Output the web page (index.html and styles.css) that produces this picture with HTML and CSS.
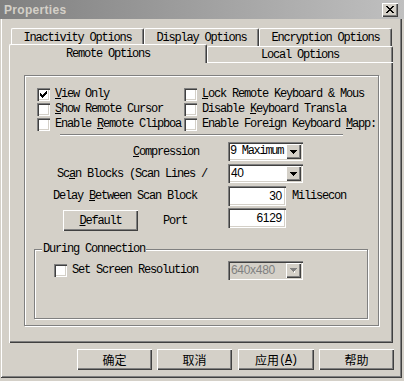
FILE: index.html
```html
<!DOCTYPE html>
<html>
<head>
<meta charset="utf-8">
<link rel="stylesheet" href="styles.css">
</head>
<body>
<div class="title">
  <span class="title-text">Properties</span>
  <span class="close"><svg width="8" height="7" viewBox="0 0 8 7" shape-rendering="crispEdges"><path d="M0 0h2v1h-2zM6 0h2v1h-2zM1 1h2v1h-2zM5 1h2v1h-2zM2 2h4v1h-4zM3 3h2v1h-2zM2 4h4v1h-4zM1 5h2v1h-2zM5 5h2v1h-2zM0 6h2v1h-2zM6 6h2v1h-2z" fill="#000"/></svg></span>
</div>
<div class="frame">
  <div class="tabrow back">
    <div class="tab w133">Inactivity Options</div>
    <div class="tab w115">Display Options</div>
    <div class="tab w133">Encryption Options</div>
  </div>
  <div class="tabrow front">
    <div class="tab sel">Remote Options</div>
    <div class="tab local">Local Options</div>
  </div>
  <div class="page">
    <div class="group">
      <div class="checks">
        <div class="chk"><span class="box"><svg width="13" height="13" viewBox="0 0 13 13" shape-rendering="crispEdges"><path d="M3 5h1v3h-1zM4 6h1v3h-1zM5 7h1v3h-1zM6 6h1v3h-1zM7 5h1v3h-1zM8 4h1v3h-1zM9 3h1v3h-1z" fill="#000"/></svg></span><span class="cl"><u>V</u>iew Only</span></div>
        <div class="chk"><span class="box"></span><span class="cl"><u>L</u>ock Remote Keyboard &amp; Mous</span></div>
        <div class="chk"><span class="box"></span><span class="cl"><u>S</u>how Remote Cursor</span></div>
        <div class="chk"><span class="box"></span><span class="cl">Disable <u>K</u>eyboard Transla</span></div>
        <div class="chk"><span class="box"></span><span class="cl">Enable <u>R</u>emote Clipboa</span></div>
        <div class="chk"><span class="box"></span><span class="cl">Enable Foreign Keyboard <u>M</u>app:</span></div>
      </div>
      <div class="sep"></div>
      <div class="frow first">
        <span class="lbl p96"><u>C</u>ompression</span>
        <div class="combo"><span class="ctext tight">9 Maximum</span><span class="arr"><svg width="7" height="4" viewBox="0 0 7 4" shape-rendering="crispEdges"><path d="M0 0h7v1h-7zM1 1h5v1h-5zM2 2h3v1h-3zM3 3h1v1h-1z" fill="#000"/></svg></span></div>
      </div>
      <div class="frow">
        <span class="lbl p20">Sc<u>a</u>n Blocks (Scan Lines /</span>
        <div class="combo"><span class="ctext num">40</span><span class="arr"><svg width="7" height="4" viewBox="0 0 7 4" shape-rendering="crispEdges"><path d="M0 0h7v1h-7zM1 1h5v1h-5zM2 2h3v1h-3zM3 3h1v1h-1z" fill="#000"/></svg></span></div>
      </div>
      <div class="frow tall">
        <span class="lbl p16">Delay <u>B</u>etween Scan Block</span>
        <div class="edit">30</div>
        <span class="unit">Milisecon</span>
      </div>
      <div class="frow last">
        <div class="lbl p26 flexl">
          <div class="btn dflt"><span><u>D</u>efault</span></div>
          <span class="port">Port</span>
        </div>
        <div class="edit">6129</div>
      </div>
      <div class="group2">
        <span class="legend">During Connection</span>
        <div class="g2row">
          <span class="box"></span>
          <span class="cl g2l">Set Screen Resolution</span>
          <div class="combo dis"><span class="ctext num">640x480</span><span class="arr"><svg width="7" height="5" viewBox="0 0 7 5" shape-rendering="crispEdges"><path d="M0 0h7v1h-7zM1 1h5v1h-5zM2 2h3v1h-3zM3 3h1v1h-1z" fill="#808080"/><path d="M4 3h1v1h-1zM4 4h1v1h-1z" fill="#fff"/></svg></span></div>
        </div>
      </div>
    </div>
  </div>
  <div class="buttons">
    <div class="btn b75">确定</div>
    <div class="btn b75">取消</div>
    <div class="btn b76 gap6">应用<span class="mono">(<u>A</u>)</span></div>
    <div class="btn b75">帮助</div>
  </div>
</div>
</body>
</html>
```
FILE: styles.css
```css
* { box-sizing: border-box; }
html, body { margin: 0; padding: 0; }
body {
  width: 404px;
  height: 381px;
  background: #d4d0c8;
  font-family: "Liberation Mono", "DejaVu Sans Mono", monospace;
  font-size: 12px;
  letter-spacing: -1.2px;
  color: #000;
  overflow: hidden;
}
u { text-decoration: underline; text-underline-offset: 1px; }

.title {
  height: 19px;
  background: linear-gradient(to right, #808080, #c0c0c0);
  display: flex;
  align-items: center;
  justify-content: space-between;
  padding: 0 6px 0 4px;
}
.title-text {
  font-family: "Liberation Sans", Arial, sans-serif;
  font-weight: bold;
  font-size: 12px;
  letter-spacing: 0.3px;
  color: #d4d0c8;
}
.close {
  width: 16px;
  height: 14px;
  background: #d4d0c8;
  box-shadow: inset 1px 1px #fff, inset -1px -1px #404040, inset -2px -2px #808080;
  display: flex;
  align-items: center;
  justify-content: center;
}
.close svg { display: block; margin-left: -1px; }

.frame {
  width: 402px;
  height: 359px;
  padding-top: 9px;
  box-shadow: inset 1px 0 #d4d0c8, inset -1px -1px #404040, inset 2px 0 #fff, inset -2px -2px #808080;
}

.tabrow { display: flex; }
.tabrow.back { margin-left: 11px; height: 18px; }
.tabrow.front { margin-left: 9px; height: 16px; align-items: flex-start; }
.tab {
  height: 18px;
  border-top: 1px solid #fff;
  border-left: 1px solid #fff;
  border-right: 1px solid #404040;
  border-top-left-radius: 2px;
  border-top-right-radius: 2px;
  box-shadow: inset -1px 0 #808080;
  display: flex;
  align-items: center;
  justify-content: center;
  background: #d4d0c8;
  white-space: nowrap;
}
.w133 { width: 133px; }
.w115 { width: 115px; }
.tab.sel {
  width: 198px;
  height: 19px;
  margin-top: -2px;
  position: relative;
  z-index: 1;
  padding-bottom: 1px;
}
.tab.local { width: 186px; height: 16px; padding-top: 1px; }

.page {
  margin-left: 9px;
  width: 384px;
  height: 281px;
  padding: 13px 0 0 15px;
  box-shadow: inset 1px 1px #fff, inset -1px -1px #404040, inset -2px -2px #808080;
}

.group {
  width: 355px;
  height: 251px;
  border: 1px solid #808080;
  box-shadow: inset 1px 1px #fff, 1px 1px #fff;
  padding: 12px 0 0 12px;
}

.checks {
  display: grid;
  grid-template-columns: 147px 193px;
  grid-auto-rows: 15px;
}
.chk { display: flex; align-items: flex-start; }
.box {
  flex: none;
  width: 13px;
  height: 13px;
  background: #fff;
  box-shadow: inset 1px 1px #808080, inset 2px 2px #404040, inset -1px -1px #fff, inset -2px -2px #d4d0c8;
}
.box svg { display: block; }
.cl {
  margin-left: 5px;
  line-height: 13px;
  white-space: nowrap;
}

.sep {
  margin: 1px 0 0 23px;
  width: 283px;
  height: 2px;
  border-top: 1px solid #808080;
  border-bottom: 1px solid #fff;
}

.frow { display: flex; align-items: center; height: 19px; margin-top: 3px; }
.frow.first { margin-top: 6px; }
.frow.tall { height: 20px; }
.frow.last { height: 22px; margin-top: 2px; align-items: flex-start; }
.lbl { flex: none; width: 191px; white-space: nowrap; }
.p96 { padding-left: 96px; }
.p20 { padding-left: 20px; }
.p16 { padding-left: 16px; }
.p26 { padding-left: 26px; }
.flexl { display: flex; align-items: center; height: 21px; margin-top: 2px; }

.combo {
  flex: none;
  width: 75px;
  height: 19px;
  background: #fff;
  box-shadow: inset 1px 1px #808080, inset 2px 2px #404040, inset -1px -1px #fff, inset -2px -2px #d4d0c8;
  padding: 2px;
  display: flex;
  align-items: stretch;
}
.ctext { flex: 1; min-width: 0; padding-left: 1px; line-height: 15px; white-space: nowrap; }
.ctext.tight { padding-left: 0; letter-spacing: -1.3px; }
.num { font-family: "Liberation Sans", Arial, sans-serif; font-size: 12px; letter-spacing: -0.3px; }
.arr {
  flex: none;
  width: 15px;
  position: relative;
  background: #d4d0c8;
  box-shadow: inset 1px 1px #fff, inset -1px -1px #404040, inset -2px -2px #808080;
  display: flex;
  align-items: center;
  justify-content: center;
}
.arr svg { display: block; }
.combo.dis { background: #d4d0c8; }
.combo.dis .ctext { color: #808080; }

.edit {
  flex: none;
  width: 58px;
  height: 20px;
  background: #fff;
  box-shadow: inset 1px 1px #808080, inset 2px 2px #404040, inset -1px -1px #fff, inset -2px -2px #d4d0c8;
  font-family: "Liberation Sans", Arial, sans-serif;
  font-size: 12px;
  letter-spacing: -0.3px;
  text-align: right;
  padding-right: 4px;
  line-height: 20px;
}
.unit { margin-left: 6px; white-space: nowrap; }

.btn {
  flex: none;
  height: 21px;
  background: #d4d0c8;
  box-shadow: inset 1px 1px #fff, inset -1px -1px #404040, inset -2px -2px #808080;
  display: flex;
  align-items: center;
  justify-content: center;
  font-family: "Noto Sans CJK SC", sans-serif;
  letter-spacing: 0;
}
.btn.dflt { width: 75px; font-family: "Liberation Mono", monospace; letter-spacing: -1.2px; }
.port { margin-left: 25px; }

.group2 {
  margin: 19px 0 0 -3px;
  width: 334px;
  height: 70px;
  border: 1px solid #808080;
  box-shadow: inset 1px 1px #fff, 1px 1px #fff;
  display: flex;
  flex-direction: column;
}
.legend {
  align-self: flex-start;
  margin: -7px 0 0 7px;
  padding: 0 1px;
  line-height: 13px;
  background: #d4d0c8;
  white-space: nowrap;
}
.g2row { display: flex; align-items: center; height: 19px; margin: 5px 0 0 19px; }
.g2l { width: 156px; }

.buttons { display: flex; margin: 6px 0 0 77px; gap: 5px; }
.b75 { width: 75px; }
.b76 { width: 76px; }
.gap6 { margin-left: 1px; }
.mono { font-family: "Liberation Mono", monospace; letter-spacing: -1.2px; }
```
